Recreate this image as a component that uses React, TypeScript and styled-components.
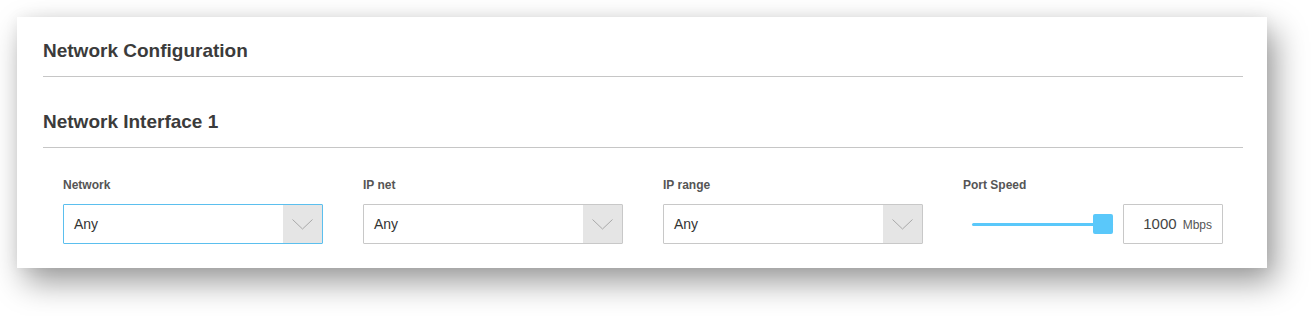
import styled, { createGlobalStyle } from "styled-components";

const GlobalStyle = createGlobalStyle`
  html, body {
    margin: 0;
    padding: 0;
    background: #ffffff;
  }
  body {
    font-family: "Liberation Sans", Arial, sans-serif;
  }
`;

type SelectProps = {
  label: string;
  value: string;
  focused?: boolean;
};

const Page = styled.div`
  padding: 17px 48px 48px 17px;
`;

const Card = styled.div`
  width: 1250px;
  background: #ffffff;
  box-sizing: border-box;
  padding: 0 24px 0 26px;
  box-shadow: 8px 14px 30px rgba(0, 0, 0, 0.4), 0 0 14px rgba(0, 0, 0, 0.05);
`;

const Section = styled.div<{ top: number }>`
  padding: ${(p) => p.top}px 0 15px;
  border-bottom: 1px solid #c6c6c6;
`;

const Title = styled.h2`
  margin: 0;
  font-size: 19px;
  line-height: 20px;
  font-weight: bold;
  color: #3b3b3b;
`;

const FieldRow = styled.div`
  display: flex;
  gap: 40px;
  padding: 30px 20px 24px;
`;

const Field = styled.div`
  width: 260px;
  display: flex;
  flex-direction: column;
`;

const Label = styled.div`
  font-size: 12px;
  line-height: 14px;
  font-weight: bold;
  color: #555555;
  margin-bottom: 12px;
`;

const SelectBox = styled.div<{ focused?: boolean }>`
  height: 40px;
  box-sizing: border-box;
  display: flex;
  border: 1px solid ${(p) => (p.focused ? "#5bbfee" : "#c8c8c8")};
  border-radius: 1px;
  background: #ffffff;
`;

const SelectValue = styled.div`
  flex: 1;
  padding-left: 10px;
  display: flex;
  align-items: center;
  font-size: 14px;
  color: #333333;
`;

const ArrowArea = styled.div`
  width: 39px;
  background: #e5e5e5;
  display: flex;
  align-items: center;
  justify-content: center;
`;

const SpeedRow = styled.div`
  display: flex;
  align-items: center;
  gap: 10px;
`;

const SliderTrack = styled.div`
  width: 141px;
  height: 40px;
  margin-left: 9px;
  position: relative;
  display: flex;
  align-items: center;
`;

const TrackFill = styled.div`
  flex: 1;
  height: 3px;
  border-radius: 2px;
  background: #5ac8fa;
`;

const Thumb = styled.div`
  position: absolute;
  right: 0;
  top: 10px;
  width: 20px;
  height: 20px;
  border-radius: 2px;
  background: #5ac8fa;
`;

const SpeedInput = styled.div`
  width: 100px;
  height: 40px;
  box-sizing: border-box;
  border: 1px solid #c8c8c8;
  border-radius: 1px;
  display: flex;
  align-items: baseline;
  justify-content: flex-end;
  gap: 6px;
  padding: 10px 10px 0 0;
`;

const SpeedValue = styled.span`
  font-size: 15px;
  line-height: 17px;
  color: #444444;
`;

const Unit = styled.span`
  font-size: 12px;
  color: #555555;
`;

const Chevron = () => (
  <svg width="21" height="11" viewBox="0 0 21 11">
    <polyline points="0.5,0.5 10.5,10 20.5,0.5" fill="none" stroke="#a8a8a8" strokeWidth="1" />
  </svg>
);

const Select = ({ label, value, focused }: SelectProps) => (
  <Field>
    <Label>{label}</Label>
    <SelectBox focused={focused}>
      <SelectValue>{value}</SelectValue>
      <ArrowArea>
        <Chevron />
      </ArrowArea>
    </SelectBox>
  </Field>
);

export default function App() {
  return (
    <Page>
      <GlobalStyle />
      <Card>
        <Section top={24}>
          <Title>Network Configuration</Title>
        </Section>
        <Section top={35}>
          <Title>Network Interface 1</Title>
        </Section>
        <FieldRow>
          <Select label="Network" value="Any" focused />
          <Select label="IP net" value="Any" />
          <Select label="IP range" value="Any" />
          <Field>
            <Label>Port Speed</Label>
            <SpeedRow>
              <SliderTrack>
                <TrackFill />
                <Thumb />
              </SliderTrack>
              <SpeedInput>
                <SpeedValue>1000</SpeedValue>
                <Unit>Mbps</Unit>
              </SpeedInput>
            </SpeedRow>
          </Field>
        </FieldRow>
      </Card>
    </Page>
  );
}
